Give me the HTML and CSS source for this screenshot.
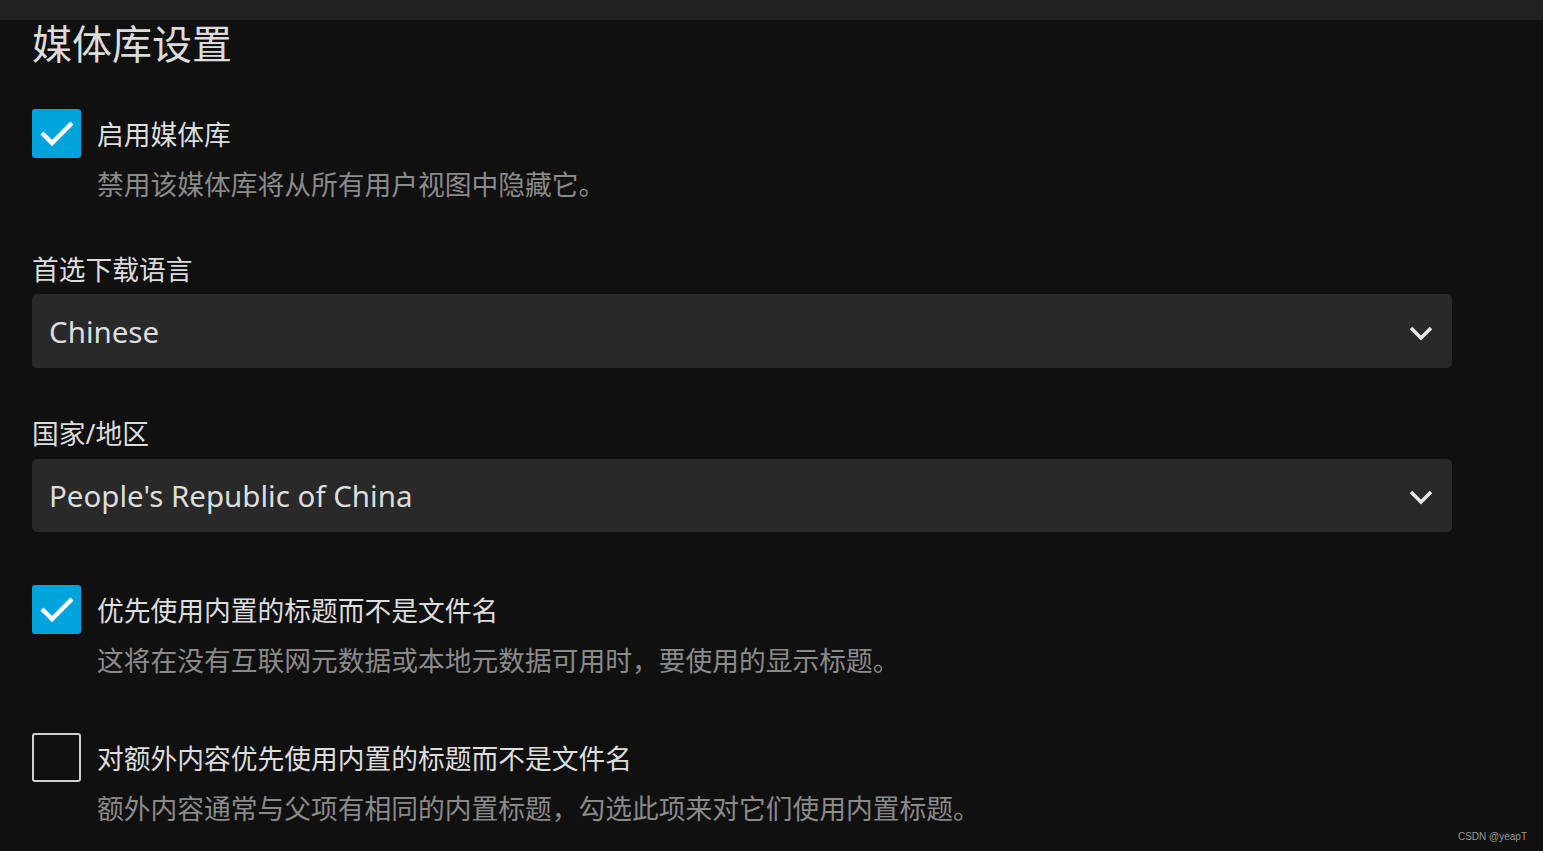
FILE: index.html
```html
<!DOCTYPE html>
<html lang="zh-CN">

<head>
    <meta charset="UTF-8">
    <title>媒体库设置</title>
    <link rel="stylesheet" href="styles.css">
</head>

<body>
    <div class="topbar"></div>

    <div class="content">
        <h1>媒体库设置</h1>

        <div class="check-field first">
            <div class="check-row">
                <span class="checkbox checked">
                    <svg viewBox="0 0 49 49" width="49" height="49"><path d="M10 24 L20 34 L40 14" fill="none" stroke="#fff" stroke-width="4.5"/></svg>
                </span>
                <span class="check-label">启用媒体库</span>
            </div>
            <div class="field-desc">禁用该媒体库将从所有用户视图中隐藏它。</div>
        </div>

        <div class="select-field lang">
            <label class="select-label">首选下载语言</label>
            <div class="select">
                <span>Chinese</span>
                <svg class="chevron" viewBox="0 0 24 15" width="24" height="15"><path d="M2 2 L12 12 L22 2" fill="none" stroke="#e6e6e6" stroke-width="3.5"/></svg>
            </div>
        </div>

        <div class="select-field country">
            <label class="select-label">国家/地区</label>
            <div class="select">
                <span>People's Republic of China</span>
                <svg class="chevron" viewBox="0 0 24 15" width="24" height="15"><path d="M2 2 L12 12 L22 2" fill="none" stroke="#e6e6e6" stroke-width="3.5"/></svg>
            </div>
        </div>

        <div class="check-field second">
            <div class="check-row">
                <span class="checkbox checked">
                    <svg viewBox="0 0 49 49" width="49" height="49"><path d="M10 24 L20 34 L40 14" fill="none" stroke="#fff" stroke-width="4.5"/></svg>
                </span>
                <span class="check-label">优先使用内置的标题而不是文件名</span>
            </div>
            <div class="field-desc">这将在没有互联网元数据或本地元数据可用时，要使用的显示标题。</div>
        </div>

        <div class="check-field third">
            <div class="check-row">
                <span class="checkbox"></span>
                <span class="check-label">对额外内容优先使用内置的标题而不是文件名</span>
            </div>
            <div class="field-desc">额外内容通常与父项有相同的内置标题，勾选此项来对它们使用内置标题。</div>
        </div>
    </div>

    <div class="watermark">CSDN @yeapT</div>
</body>

</html>
```

FILE: styles.css
```css
body {
    margin: 0;
    background: #101010;
    color: #dddddd;
    font-family: "Noto Sans", "Noto Sans CJK SC", sans-serif;
    height: 851px;
    overflow: hidden;
    position: relative;
}

.topbar {
    height: 20px;
    background: #212121;
}

.content {
    padding-left: 32px;
    width: 1420px;
}

h1 {
    margin: 0;
    font-size: 40px;
    font-weight: 400;
    line-height: 48px;
    color: #dcdcdc;
}

.check-field.first {
    margin-top: 41px;
}

.check-field.second {
    margin-top: 53px;
}

.check-field.third {
    margin-top: 54px;
}

.check-row {
    display: flex;
    align-items: center;
    gap: 16px;
    height: 49px;
}

.checkbox {
    box-sizing: border-box;
    width: 49px;
    height: 49px;
    border: 2.5px solid #d0d0d0;
    border-radius: 3px;
    flex-shrink: 0;
}

.checkbox.checked {
    border: none;
    background: #00a4dc;
}

.checkbox svg {
    display: block;
}

.check-label {
    font-size: 26.75px;
    line-height: 36px;
    color: #dddddd;
    margin-top: 2px;
}

.field-desc {
    margin-top: 9px;
    padding-left: 65px;
    font-size: 26.75px;
    line-height: 36px;
    color: #8a8a8a;
}

.select-field.lang {
    margin-top: 49px;
}

.select-field.country {
    margin-top: 48px;
}

.select-label {
    display: block;
    font-size: 26.75px;
    line-height: 36px;
    color: #dddddd;
}

.select {
    margin-top: 6px;
    height: 74px;
    background: #292929;
    border-radius: 5px;
    display: flex;
    align-items: center;
    justify-content: space-between;
    padding: 0 19px 0 17px;
    font-size: 29.5px;
    color: #dddddd;
}

.country .select {
    margin-top: 7px;
    height: 73px;
}

.chevron {
    display: block;
    margin-top: 4px;
}

.watermark {
    position: absolute;
    right: 16px;
    bottom: 9px;
    font-family: "Liberation Sans", Arial, sans-serif;
    font-size: 10px;
    color: #9a9a9a;
}
```
